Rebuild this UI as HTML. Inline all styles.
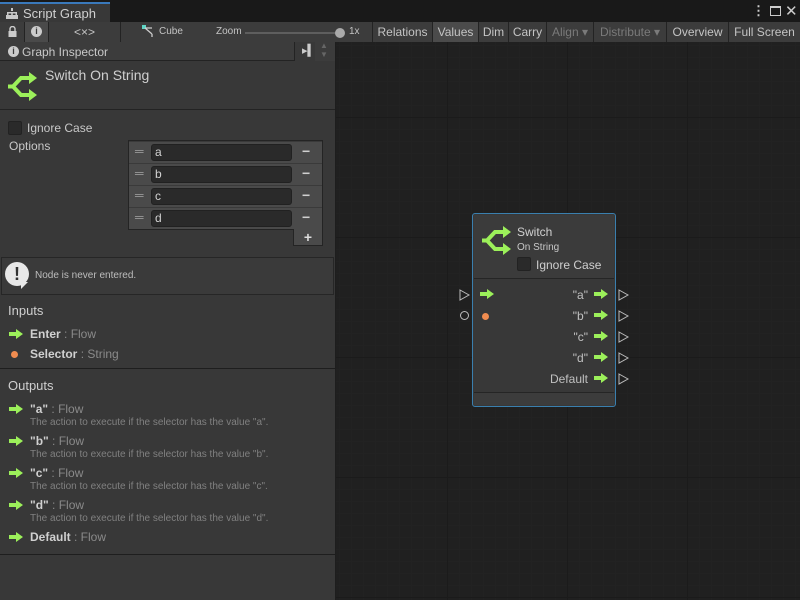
<!DOCTYPE html>
<html><head><meta charset="utf-8"><style>
*{margin:0;padding:0;box-sizing:border-box}
body{width:800px;height:600px;overflow:hidden;background:#202020;font-family:"Liberation Sans",sans-serif;color:#c8c8c8;font-size:12px;position:relative}
.a{position:absolute}
.t{white-space:nowrap}
#graph{left:336px;top:42px;width:464px;height:558px;background-color:#202020;
background-image:linear-gradient(#1b1b1b 1px,transparent 1px),linear-gradient(90deg,#1b1b1b 1px,transparent 1px),linear-gradient(#222 1px,transparent 1px),linear-gradient(90deg,#222 1px,transparent 1px);
background-size:120px 120px,120px 120px,12px 12px,12px 12px;background-position:0 75px,111px 0,0 3px,3px 0}
.tb{top:22px;height:20px;background:#3c3c3c;border-right:1px solid #232323;font-size:12px;line-height:20px;text-align:center;color:#c4c4c4}
.dis{color:#7a7a7a}
.row{position:absolute;left:129px;width:193px;height:22px;background:#4a4a4a;border-top:1px solid #3a3a3a}
.fld{position:absolute;left:22px;top:2px;width:141px;height:17px;background:#2a2a2a;border:1px solid #212121;border-radius:3px;color:#d2d2d2;padding-left:3px;font-size:12px;line-height:15px}
.sm{font-size:10px;color:#808080}
.lbl{font-size:12px;color:#8a8a8a}
.b{font-weight:bold;color:#d0d0d0}
</style></head><body>
<div class="a" style="left:0;top:0;width:800px;height:22px;background:#191919"></div>
<div class="a" style="left:0;top:2px;width:110px;height:20px;background:#383838;border-top:2px solid #3a79bb"></div>
<svg class="a" style="left:6px;top:8px" width="12" height="11"><path d="M5 0h2v3h-2zM1 4h10v1.5H1zM1 4h1.5v3H1zM9.5 4H11v3H9.5zM5.2 4h1.6v3H5.2zM0 7h4v4H0zM4 7h4v4H4zM8 7h4v4H8z" fill="#c8c8c8"/></svg>
<div class="a t" style="left:23px;top:6px;font-size:13px;color:#d0d0d0">Script Graph</div>
<div class="a t" style="left:752px;top:3px;color:#ccc;font-size:13px;font-weight:bold">⋮</div>
<div class="a" style="left:770px;top:6px;width:11px;height:10px;border:1.5px solid #ccc;border-top-width:2.5px"></div>
<div class="a t" style="left:785px;top:2px;color:#ccc;font-size:15px">✕</div>
<div class="a tb" style="left:0;width:25px"></div>
<svg class="a" style="left:8px;top:26px" width="9" height="11"><path d="M2 5V3a2.5 2.5 0 015 0v2" stroke="#ccc" stroke-width="1.4" fill="none"/><rect x="0.5" y="5" width="8" height="6" fill="#ccc"/></svg>
<div class="a tb" style="left:25px;width:24px;background:#4a4a4a"></div>
<div class="a" style="left:31px;top:26px;width:11px;height:11px;border-radius:50%;background:#ccc;color:#3c3c3c;font-size:9px;font-weight:bold;text-align:center;line-height:11px">i</div>
<div class="a tb" style="left:49px;width:72px">&lt;×&gt;</div>
<div class="a tb" style="left:121px;width:252px"></div>
<svg class="a" style="left:142px;top:25px" width="12" height="12"><rect x="0" y="0" width="4" height="4" fill="#5fd6c6"/><path d="M3 3L10 9M3 3H10M10 9V12" stroke="#ccc" stroke-width="1.3" fill="none"/></svg>
<div class="a t" style="left:159px;top:26px;font-size:10px;color:#c4c4c4">Cube</div>
<div class="a t" style="left:216px;top:26px;font-size:10px;color:#c4c4c4">Zoom</div>
<div class="a" style="left:245px;top:32px;width:95px;height:2px;background:#5e5e5e"></div>
<div class="a" style="left:335px;top:28px;width:10px;height:10px;border-radius:50%;background:#aaa"></div>
<div class="a t" style="left:349px;top:26px;font-size:10px;color:#c4c4c4">1x</div>
<div class="a tb" style="left:373px;width:60px">Relations</div>
<div class="a tb" style="left:433px;width:46px;background:#4b4b4b">Values</div>
<div class="a tb" style="left:479px;width:30px">Dim</div>
<div class="a tb" style="left:509px;width:38px">Carry</div>
<div class="a tb dis" style="left:547px;width:47px">Align ▾</div>
<div class="a tb dis" style="left:594px;width:73px">Distribute ▾</div>
<div class="a tb" style="left:667px;width:62px">Overview</div>
<div class="a tb" style="left:729px;width:71px;border-right:none">Full Screen</div>
<div id="graph" class="a"></div>
<div class="a" style="left:0;top:42px;width:336px;height:558px;background:#383838;border-right:1px solid #1e1e1e"></div>
<div class="a" style="left:0;top:42px;width:295px;height:19px;background:#3c3c3c;border-bottom:1px solid #232323;border-right:1px solid #232323"></div>
<div class="a" style="left:8px;top:46px;width:11px;height:11px;border-radius:50%;background:#ccc;color:#3c3c3c;font-size:9px;font-weight:bold;text-align:center;line-height:11px">i</div>
<div class="a t" style="left:22px;top:45px;font-size:12px;color:#c8c8c8">Graph Inspector</div>
<div class="a t" style="left:302px;top:44px;font-size:11px;color:#ccc">▸▍</div>
<div class="a" style="left:315px;top:42px;width:20px;height:19px;background:#3c3c3c"></div>
<div class="a t" style="left:320px;top:41px;font-size:8px;color:#666;line-height:9px">▲<br>▼</div>
<svg class="a" style="left:7px;top:72px" width="30" height="30"><path d="M26 6H14L6 14.5L14 23H26" stroke="#9cf05a" stroke-width="4" fill="none"/><path d="M22 0L30 6L22 12zM22 17L30 23L22 29z" fill="#9cf05a"/><path d="M1 12.5h5v4H1z" fill="#9cf05a"/></svg>
<div class="a t" style="left:45px;top:67px;font-size:14px;color:#cfcfcf">Switch On String</div>
<div class="a" style="left:0;top:109px;width:335px;height:1px;background:#232323"></div>
<div class="a" style="left:8px;top:121px;width:14px;height:14px;background:#2a2a2a;border:1px solid #222;border-radius:2px"></div>
<div class="a t" style="left:27px;top:121px;font-size:12px;color:#c8c8c8">Ignore Case</div>
<div class="a t" style="left:9px;top:139px;font-size:12px;color:#c8c8c8">Options</div>
<div class="a" style="left:128px;top:140px;width:195px;height:90px;border:1px solid #242424;background:#4a4a4a"></div>
<div class="row" style="top:141px"><span class="a" style="left:6px;top:2px;color:#999">═</span><div class="fld">a</div><span class="a b" style="left:173px;top:1px;font-size:14px">−</span></div>
<div class="row" style="top:163px"><span class="a" style="left:6px;top:2px;color:#999">═</span><div class="fld">b</div><span class="a b" style="left:173px;top:1px;font-size:14px">−</span></div>
<div class="row" style="top:185px"><span class="a" style="left:6px;top:2px;color:#999">═</span><div class="fld">c</div><span class="a b" style="left:173px;top:1px;font-size:14px">−</span></div>
<div class="row" style="top:207px"><span class="a" style="left:6px;top:2px;color:#999">═</span><div class="fld">d</div><span class="a b" style="left:173px;top:1px;font-size:14px">−</span></div>
<div class="a" style="left:293px;top:229px;width:30px;height:17px;background:#4a4a4a;border:1px solid #242424;border-top:none;text-align:center;font-weight:bold;color:#ddd;font-size:14px;line-height:16px">+</div>
<div class="a" style="left:1px;top:257px;width:333px;height:38px;background:#3a3a3a;border:1px solid #262626"></div>
<div class="a" style="left:5px;top:262px;width:24px;height:24px;border-radius:50%;background:#e8e8e8;color:#333;font-weight:bold;font-size:18px;text-align:center;line-height:24px">!</div>
<div class="a" style="left:21px;top:282px;width:0;height:0;border-left:7px solid #e8e8e8;border-bottom:7px solid transparent"></div>
<div class="a t" style="left:35px;top:270px;font-size:10px;color:#bdbdbd">Node is never entered.</div>
<div class="a t" style="left:8px;top:303px;font-size:13px;color:#cfcfcf">Inputs</div>
<svg class="a" style="left:9px;top:329px" width="14" height="10"><path d="M0 3h7V0l7 5-7 5V7H0z" fill="#9cf05a"/></svg>
<div class="a t lbl" style="left:30px;top:327px"><span class="b">Enter</span> : Flow</div>
<div class="a" style="left:11px;top:351px;width:7px;height:7px;border-radius:50%;background:#f08c50"></div>
<div class="a t lbl" style="left:30px;top:347px"><span class="b">Selector</span> : String</div>
<div class="a" style="left:0;top:368px;width:335px;height:1px;background:#1e1e1e"></div>
<div class="a t" style="left:8px;top:378px;font-size:13px;color:#cfcfcf">Outputs</div>
<svg class="a" style="left:9px;top:404px" width="14" height="10"><path d="M0 3h7V0l7 5-7 5V7H0z" fill="#9cf05a"/></svg>
<div class="a t lbl" style="left:30px;top:402px"><span class="b">"a"</span> : Flow</div>
<div class="a t sm" style="left:30px;top:417px">The action to execute if the selector has the value "a".</div>
<svg class="a" style="left:9px;top:436px" width="14" height="10"><path d="M0 3h7V0l7 5-7 5V7H0z" fill="#9cf05a"/></svg>
<div class="a t lbl" style="left:30px;top:434px"><span class="b">"b"</span> : Flow</div>
<div class="a t sm" style="left:30px;top:449px">The action to execute if the selector has the value "b".</div>
<svg class="a" style="left:9px;top:468px" width="14" height="10"><path d="M0 3h7V0l7 5-7 5V7H0z" fill="#9cf05a"/></svg>
<div class="a t lbl" style="left:30px;top:466px"><span class="b">"c"</span> : Flow</div>
<div class="a t sm" style="left:30px;top:481px">The action to execute if the selector has the value "c".</div>
<svg class="a" style="left:9px;top:500px" width="14" height="10"><path d="M0 3h7V0l7 5-7 5V7H0z" fill="#9cf05a"/></svg>
<div class="a t lbl" style="left:30px;top:498px"><span class="b">"d"</span> : Flow</div>
<div class="a t sm" style="left:30px;top:513px">The action to execute if the selector has the value "d".</div>
<svg class="a" style="left:9px;top:532px" width="14" height="10"><path d="M0 3h7V0l7 5-7 5V7H0z" fill="#9cf05a"/></svg>
<div class="a t lbl" style="left:30px;top:530px"><span class="b">Default</span> : Flow</div>
<div class="a" style="left:0;top:554px;width:335px;height:1px;background:#1e1e1e"></div>
<div class="a" style="left:472px;top:213px;width:144px;height:194px;border:1px solid #3a7fae;border-radius:3px;background:#383838"></div>
<div class="a" style="left:474px;top:215px;width:140px;height:64px;background:#3b3b3b;border-bottom:1px solid #252525"></div>
<svg class="a" style="left:481px;top:226px" width="30" height="30"><path d="M26 6H14L6 14.5L14 23H26" stroke="#9cf05a" stroke-width="4" fill="none"/><path d="M22 0L30 6L22 12zM22 17L30 23L22 29z" fill="#9cf05a"/><path d="M1 12.5h5v4H1z" fill="#9cf05a"/></svg>
<div class="a t" style="left:517px;top:225px;font-size:12px;color:#d0d0d0">Switch</div>
<div class="a t" style="left:517px;top:242px;font-size:10px;color:#c8c8c8">On String</div>
<div class="a" style="left:517px;top:257px;width:14px;height:14px;background:#2a2a2a;border:1px solid #222;border-radius:2px"></div>
<div class="a t" style="left:536px;top:258px;font-size:12px;color:#cfcfcf">Ignore Case</div>
<div class="a" style="left:474px;top:392px;width:140px;height:1px;background:#252525"></div>
<div class="a" style="left:474px;top:393px;width:140px;height:12px;background:#3c3c3c"></div>
<svg class="a" style="left:459px;top:289px" width="11" height="12"><path d="M1 1L10 6L1 11z" fill="none" stroke="#bbb" stroke-width="1"/></svg>
<svg class="a" style="left:459px;top:310px" width="11" height="11"><circle cx="5.5" cy="5.5" r="4" fill="none" stroke="#bbb"/></svg>
<svg class="a" style="left:480px;top:289px" width="14" height="10"><path d="M0 3h7V0l7 5-7 5V7H0z" fill="#9cf05a"/></svg>
<div class="a" style="left:482px;top:313px;width:7px;height:7px;border-radius:50%;background:#f08c50"></div>
<div class="a t" style="right:212px;top:288px;font-size:12px;color:#c0c0c0">"a"</div>
<div class="a t" style="right:212px;top:309px;font-size:12px;color:#c0c0c0">"b"</div>
<div class="a t" style="right:212px;top:330px;font-size:12px;color:#c0c0c0">"c"</div>
<div class="a t" style="right:212px;top:351px;font-size:12px;color:#c0c0c0">"d"</div>
<div class="a t" style="right:212px;top:372px;font-size:12px;color:#c0c0c0">Default</div>
<svg class="a" style="left:594px;top:289px" width="14" height="10"><path d="M0 3h7V0l7 5-7 5V7H0z" fill="#9cf05a"/></svg>
<svg class="a" style="left:594px;top:310px" width="14" height="10"><path d="M0 3h7V0l7 5-7 5V7H0z" fill="#9cf05a"/></svg>
<svg class="a" style="left:594px;top:331px" width="14" height="10"><path d="M0 3h7V0l7 5-7 5V7H0z" fill="#9cf05a"/></svg>
<svg class="a" style="left:594px;top:352px" width="14" height="10"><path d="M0 3h7V0l7 5-7 5V7H0z" fill="#9cf05a"/></svg>
<svg class="a" style="left:594px;top:373px" width="14" height="10"><path d="M0 3h7V0l7 5-7 5V7H0z" fill="#9cf05a"/></svg>
<svg class="a" style="left:618px;top:289px" width="11" height="12"><path d="M1 1L10 6L1 11z" fill="none" stroke="#bbb"/></svg>
<svg class="a" style="left:618px;top:310px" width="11" height="12"><path d="M1 1L10 6L1 11z" fill="none" stroke="#bbb"/></svg>
<svg class="a" style="left:618px;top:331px" width="11" height="12"><path d="M1 1L10 6L1 11z" fill="none" stroke="#bbb"/></svg>
<svg class="a" style="left:618px;top:352px" width="11" height="12"><path d="M1 1L10 6L1 11z" fill="none" stroke="#bbb"/></svg>
<svg class="a" style="left:618px;top:373px" width="11" height="12"><path d="M1 1L10 6L1 11z" fill="none" stroke="#bbb"/></svg>
</body></html>
